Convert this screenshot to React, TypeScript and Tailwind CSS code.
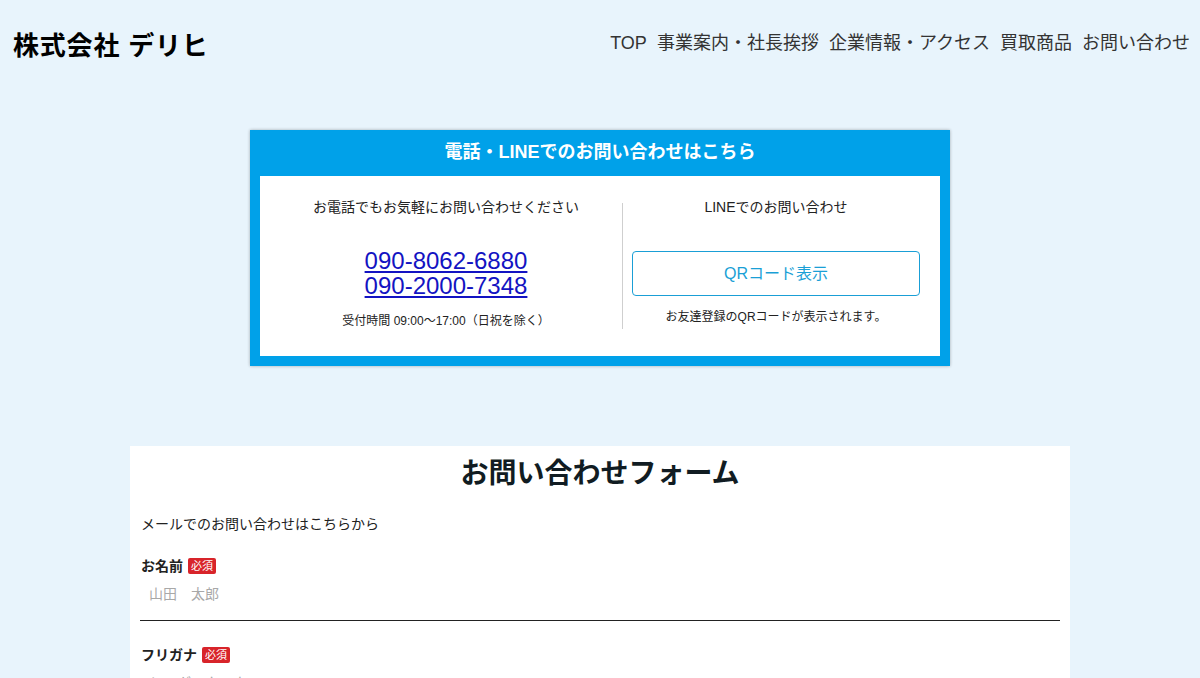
import React from "react";

const navItems = ["TOP", "事業案内・社長挨拶", "企業情報・アクセス", "買取商品", "お問い合わせ"];

function Badge() {
  return (
    <span className="ml-[5px] inline-flex h-[16px] items-center rounded-[2px] bg-[#d8242a] px-[3px] text-[11px] font-normal leading-none text-white">
      必須
    </span>
  );
}

export default function App() {
  return (
    <div
      className="min-h-[678px] w-full bg-[#e8f4fc] text-[#222]"
      style={{ fontFamily: '"Liberation Sans", "Noto Sans CJK JP", sans-serif' }}
    >
      {/* Header */}
      <header className="flex items-start justify-between pl-[13px] pr-[10px] pt-[30px]">
        <div className="text-[26px] font-bold leading-[32px] tracking-[0.8px] text-black">株式会社 デリヒ</div>
        <nav className="flex gap-[10px] pt-[1px] text-[18px] leading-[24px] text-[#333]">
          {navItems.map((n) => (
            <span key={n}>{n}</span>
          ))}
        </nav>
      </header>

      {/* Phone / LINE box */}
      <div className="mx-auto mt-[68px] w-[700px] bg-[#00a1e9] px-[10px] pb-[10px] shadow-[0_0_3px_rgba(0,0,0,0.3)]">
        <div className="flex h-[46px] items-center justify-center pb-[2px] text-[18px] font-bold text-white">
          電話・LINEでのお問い合わせはこちら
        </div>
        <div className="flex h-[180px] bg-white">
          <div className="flex w-[362px] flex-col items-center pl-[10px] pt-[21px]">
            <div className="text-[14px] leading-[20px] text-[#222]">お電話でもお気軽にお問い合わせください</div>
            <a href="#" className="mt-[31px] text-[24px] leading-[25px] text-[#1313c2] underline">090-8062-6880</a>
            <a href="#" className="text-[24px] leading-[25px] text-[#1313c2] underline">090-2000-7348</a>
            <div className="mt-[14px] text-[12px] leading-[18px] text-[#222]">受付時間 09:00〜17:00（日祝を除く）</div>
          </div>
          <div className="mt-[27px] h-[126px] w-px bg-[#cfcfcf]" />
          <div className="flex flex-1 flex-col items-center pl-[9px] pr-[20px] pt-[21px]">
            <div className="text-[14px] leading-[20px] text-[#222]">LINEでのお問い合わせ</div>
            <button className="mt-[34px] flex h-[45px] w-full items-center justify-center rounded-[4px] border border-[#1a9fd6] bg-white text-[16px] text-[#1a9fd6]">
              QRコード表示
            </button>
            <div className="mt-[13px] text-[12px] leading-[16px] text-[#222]">お友達登録のQRコードが表示されます。</div>
          </div>
        </div>
      </div>

      {/* Form */}
      <div className="mx-auto mt-[80px] w-[940px] bg-white px-[10px] pt-[8px]">
        <h1 className="text-center text-[28px] font-bold leading-[40px] text-[#111c22]">お問い合わせフォーム</h1>
        <p className="mt-[20px] pl-[1px] text-[14px] leading-[20px] text-[#222]">メールでのお問い合わせはこちらから</p>

        <div className="mt-[22px] flex h-[20px] items-center pl-[1px] text-[14px] font-bold text-[#222]">
          お名前<Badge />
        </div>
        <div className="flex h-[36px] items-center pl-[9px] text-[14px] text-[#a8a8a8]">山田　太郎</div>
        <div className="mt-[8px] h-px w-full bg-[#222]" />

        <div className="mt-[24px] flex h-[20px] items-center pl-[1px] text-[14px] font-bold text-[#222]">
          フリガナ<Badge />
        </div>
        <div className="flex h-[36px] items-center pl-[9px] text-[14px] text-[#a8a8a8]">ヤマダ　タロウ</div>
        <div className="mt-[8px] h-px w-full bg-[#222]" />
        <div className="h-[40px]" />
      </div>
    </div>
  );
}
